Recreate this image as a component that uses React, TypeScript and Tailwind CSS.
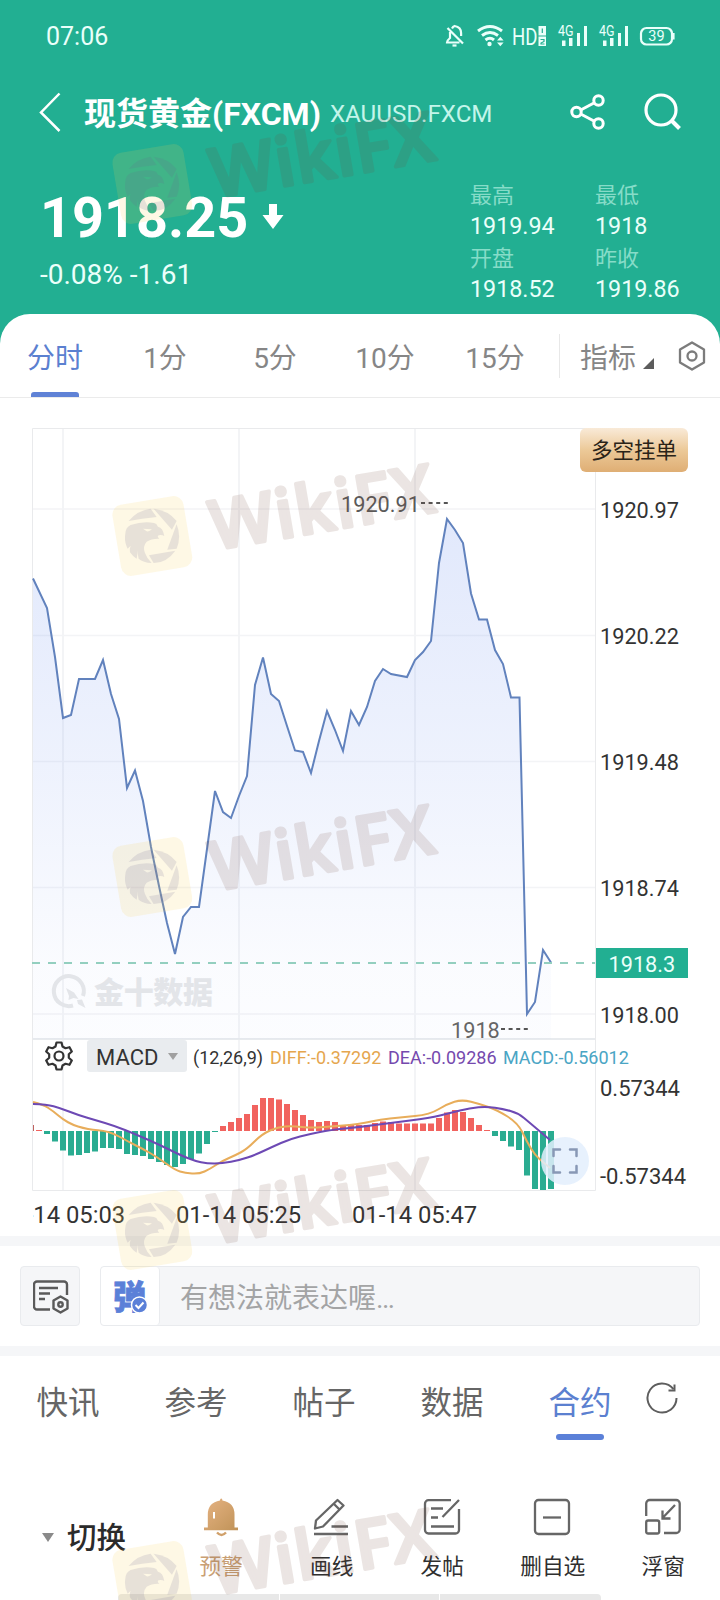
import { ReactNode } from 'react';

type Point = [number, number];

const quoteStats = [
  { label: '最高', value: '1919.94' },
  { label: '最低', value: '1918' },
  { label: '开盘', value: '1918.52' },
  { label: '昨收', value: '1919.86' },
];

const periods = ['分时', '1分', '5分', '10分', '15分'];

const sections = ['快讯', '参考', '帖子', '数据', '合约'];

const pricePoints: Point[] = [
  [33, 578.5], [47, 608], [55, 657], [63, 718], [71, 715], [79, 679], [95, 679],
  [103, 660], [111, 694], [119, 719], [127, 788], [135, 770.5], [143, 801],
  [151, 847], [159, 886], [167, 923], [175, 954], [183, 917], [191, 907],
  [199, 907], [207, 849], [215, 791], [223, 812], [231, 818], [239, 796],
  [247, 776], [255, 685], [263, 657.5], [271, 694], [279, 701], [287, 726],
  [295, 750.5], [303, 752], [311, 773], [319, 741], [327, 711], [335, 730],
  [343, 751], [351, 711], [359, 725], [367, 707], [375, 681], [383, 669],
  [391, 674], [407, 677], [415, 660], [423, 652], [431, 641], [439, 563],
  [447, 519], [455, 530], [463, 543], [471, 593.5], [479, 619.5], [487, 619.5],
  [495, 650], [503, 664], [511, 697.5], [519.5, 697.5], [527, 1014], [535, 1002],
  [543, 950], [551, 962.5],
];

// Histogram heights in px, one bar every 8px, positive is above the zero line
const macdBars = [
  1, -3, -10.5, -19.5, -24.5, -24, -22, -20.5, -17, -17, -18, -23, -24, -25, -28,
  -31, -34, -36, -33, -28, -22.5, -13, -1, 5, 9, 13, 17, 26, 33, 33, 31.5, 27, 21,
  16, 11, 9, 10, 9, 6, 6.5, 6, 6, 8, 9.5, 9, 7.5, 7.5, 7.5, 7.5, 7.5, 13, 18.5, 21,
  19, 13, 6, 1, -5, -10, -15.5, -19, -44.5, -58, -59, -58,
];

const diffPoints: Point[] = [
  [33, 1102], [43, 1104.5], [53, 1111], [63, 1119.5], [73, 1125], [83, 1128],
  [93, 1130], [103, 1130.5], [115, 1134], [127, 1141], [143, 1149], [157, 1157],
  [175, 1170], [185, 1173], [199, 1174], [210, 1169], [222, 1161], [235, 1155.5],
  [247, 1149], [262, 1134], [278, 1127], [292, 1126], [312, 1128], [330, 1126.5],
  [350, 1125], [365, 1123], [380, 1119.5], [400, 1117.5], [430, 1114.5],
  [447, 1104], [462, 1099.5], [480, 1104], [497, 1110], [518, 1123], [527, 1142],
  [535, 1155], [543, 1162], [550, 1168],
];

const deaPoints: Point[] = [
  [33, 1104], [47, 1104.5], [60, 1108], [78, 1115], [95, 1120], [115, 1126],
  [135, 1134], [160, 1145], [180, 1155], [195, 1161], [207, 1163.5], [222, 1163.5],
  [240, 1160], [255, 1155], [272, 1147], [290, 1139], [310, 1134], [330, 1130],
  [360, 1127], [390, 1123], [430, 1118], [450, 1113], [470, 1108], [487, 1106.5],
  [503, 1109], [518, 1113], [530, 1123], [550, 1140],
];

const priceLabels = [
  { y: 517.5, text: '1920.97' },
  { y: 643.5, text: '1920.22' },
  { y: 770, text: '1919.48' },
  { y: 896, text: '1918.74' },
  { y: 1023, text: '1918.00' },
];

const toPath = (points: Point[]) => 'M' + points.map((p) => p.join(' ')).join('L');

// Quadratic smoothing through the midpoints
const toCurve = (points: Point[]) => {
  let d = `M${points[0][0]} ${points[0][1]}`;
  for (let i = 1; i < points.length - 1; i++) {
    const [x, y] = points[i];
    const [nx, ny] = points[i + 1];
    d += `Q${x} ${y} ${(x + nx) / 2} ${(y + ny) / 2}`;
  }
  const last = points[points.length - 1];
  return d + `L${last[0]} ${last[1]}`;
};

export default function App() {
  return (
    <div className="relative h-[1600px] w-[720px] overflow-hidden bg-[#22af92] font-['Roboto','Noto_Sans_CJK_SC',sans-serif]">
      <div className="flex h-full flex-col">
        <header className="h-[314px] shrink-0 text-[#eafffa]">
          <StatusBar />
          <TitleBar />
          <Quote />
        </header>
        <main className="flex grow flex-col rounded-t-[30px] bg-white">
          <PeriodTabs />
          <Chart />
          <div className="h-2.5 shrink-0 bg-[#f5f6f8]"></div>
          <CommentBar />
          <div className="h-2.5 shrink-0 bg-[#f5f6f8]"></div>
          <SectionTabs />
          <Toolbar />
        </main>
      </div>
      <div className="absolute top-[1594px] left-[118px] flex h-2.5 w-[483px] gap-px overflow-hidden rounded-t-sm">
        <div className="w-[161px] bg-[#e8e8e8]"></div>
        <div className="w-[159px] bg-[#e8e8e8]"></div>
        <div className="grow bg-[#e8e8e8]"></div>
      </div>
      <Watermarks />
    </div>
  );
}

function StatusBar() {
  return (
    <div className="flex h-[72px] items-center justify-between pr-[45px] pl-[46px]">
      <span className="text-[25px] leading-none">07:06</span>
      <svg width="230" height="30" viewBox="445 21 230 30" fill="none" stroke="currentColor">
        <path
          d="M459.500 42.500H447q0-2 3-4.500v-6M452 28.500q1-2 2.600-2.500 6.500 1 6.500 7v3M447.500 28l15.500 15.500"
          strokeWidth="2.200"
        />
        <path d="M452.500 45.500h4" strokeWidth="2.200" />
        <path d="M478 31q12-9 24 0M482 35.500q8-6 16 0M485.500 40q4.500-3.500 8.500 0" strokeWidth="3" />
        <circle cx="489.500" cy="44" r="2.200" fill="currentColor" stroke="none" />
        <path d="M497 40.500l3.300-3.800 3.300 3.800zM497 42.500l3.300 3.800 3.300-3.800z" fill="currentColor" stroke="none" />
        <g fill="currentColor" stroke="none">
          <text x="512" y="44.500" fontSize="23" textLength="25.500" lengthAdjust="spacingAndGlyphs">
            HD
          </text>
          <rect x="538.500" y="26" width="7.500" height="9.500" />
          <rect x="538.500" y="36.500" width="7.500" height="9.500" />
        </g>
        <path d="M542.300 28.500v4.500M540.500 39.500h3.500v2l-3 1.500v1h3.500" stroke="#22af92" strokeWidth="1.200" />
        <Signal x={558} />
        <Signal x={599} />
        <rect x="641" y="28" width="31" height="16.500" rx="5.500" strokeWidth="2.200" />
        <path d="M673.500 33v6.500" strokeWidth="2.200" />
        <text x="656.500" y="41.300" textAnchor="middle" fontSize="14.500" fill="currentColor" stroke="none">
          39
        </text>
      </svg>
    </div>
  );
}

function Signal({ x }: { x: number }) {
  return (
    <g fill="currentColor" stroke="none">
      <text x={x} y="36" fontSize="14" textLength="15.500" lengthAdjust="spacingAndGlyphs">
        4G
      </text>
      <rect x={x + 4} y="40.500" width="3.500" height="5.500" />
      <rect x={x + 11} y="38" width="3.500" height="8" />
      <rect x={x + 19} y="33" width="3" height="13" />
      <rect x={x + 26} y="26" width="3" height="20" />
    </g>
  );
}

function TitleBar() {
  return (
    <div className="flex h-[80px] items-center pr-[38px] pl-[39px] text-white">
      <svg width="22" height="40" viewBox="0 0 22 40" fill="none" stroke="currentColor" strokeWidth="2.500">
        <path d="M20.500 1.500L2 20.500l18.500 18.500" />
      </svg>
      <h1 className="ml-[23px] pt-[3px] text-[32px] leading-10 font-bold whitespace-nowrap">
        现货黄金(FXCM)
      </h1>
      <span className="ml-[9px] pt-[3px] text-[24.200px] leading-10 text-[#c4f5ea]">XAUUSD.FXCM</span>
      <svg className="ml-auto" width="36" height="36" viewBox="0 0 36 36" fill="none" stroke="currentColor" strokeWidth="3">
        <circle cx="6.500" cy="18" r="4.700" />
        <circle cx="28.500" cy="6.500" r="4.700" />
        <circle cx="28.500" cy="29.500" r="4.700" />
        <path d="M10.700 16l13.700-7.300M10.700 20l13.700 7.300" />
      </svg>
      <svg className="ml-[38px]" width="38" height="38" viewBox="0 0 38 38" fill="none" stroke="currentColor" strokeWidth="3.200">
        <circle cx="17" cy="17" r="15" />
        <path d="M28 28l7.500 7.500" strokeWidth="4" />
      </svg>
    </div>
  );
}

function Quote() {
  return (
    <div className="flex justify-between pr-[31px] pl-[40px]">
      <div className="pt-[34px]">
        <div className="flex items-center">
          <span className="text-[55.800px] leading-[64px] font-bold text-white">1918.25</span>
          <svg className="mb-1 ml-3.5" width="22" height="25" viewBox="0 0 22 25" fill="white">
            <path d="M7 0h8v11h6.500L11 25 .5 11H7z" />
          </svg>
        </div>
        <p className="mt-[5px] text-[28px] leading-10">-0.08% -1.61</p>
      </div>
      <div className="grid grid-cols-[125px_94px] pt-[28px]">
        {quoteStats.map((stat) => (
          <div key={stat.label} className="h-[63px]">
            <p className="text-[22px] leading-8 text-[#86dcc8]">{stat.label}</p>
            <p className="text-[23.300px] leading-[29px]">{stat.value}</p>
          </div>
        ))}
      </div>
    </div>
  );
}

function PeriodTabs() {
  return (
    <nav className="flex h-[84px] shrink-0 items-center border-b border-[#ebebeb] text-[28px] text-[#868686]">
      {periods.map((period, index) => (
        <div
          key={period}
          className={
            index === 0
              ? 'relative flex h-full w-[110px] items-center justify-center pt-1.5 text-[#5b80d0]'
              : 'relative flex h-full w-[110px] items-center justify-center pt-1.5'
          }
        >
          {period}
          {index === 0 && (
            <span className="absolute bottom-0 h-[5px] w-12 rounded-t-[3px] bg-[#5f82d6]"></span>
          )}
        </div>
      ))}
      <div className="ml-[9px] h-11 w-px bg-[#e8e8e8]"></div>
      <span className="ml-5 pt-1.5">指标</span>
      <svg className="mt-4 ml-[7px]" width="11" height="11" viewBox="0 0 11 11" fill="#5c5c5c">
        <path d="M11 0v11H0z" />
      </svg>
      <svg className="ml-6" width="28" height="30" viewBox="0 0 28 30" fill="none" stroke="#7c7c7c" strokeWidth="2.300">
        <path d="M14 1.500l12 7v13l-12 7-12-7v-13z" strokeLinejoin="round" />
        <circle cx="14" cy="15" r="4.500" />
      </svg>
    </nav>
  );
}

function Chart() {
  return (
    <section className="relative h-[838px] shrink-0">
      <svg width="720" height="838" viewBox="0 398 720 838">
        <defs>
          <linearGradient id="area" x1="0" y1="519" x2="0" y2="1039" gradientUnits="userSpaceOnUse">
            <stop offset="0" stopColor="#5b83ee" stopOpacity="0.18" />
            <stop offset="0.5" stopColor="#5b83ee" stopOpacity="0.1" />
            <stop offset="0.85" stopColor="#5b83ee" stopOpacity="0.03" />
            <stop offset="1" stopColor="#5b83ee" stopOpacity="0.02" />
          </linearGradient>
          <clipPath id="plot">
            <rect x="33" y="1040" width="563" height="196" />
          </clipPath>
        </defs>

        <g stroke="#f3f4f6" strokeWidth="2">
          <path d="M63 429V1190M239 429V1190M415 429V1190" />
          <path d="M33 509H595M33 635.5H595M33 761.5H595M33 887.5H595M33 1014H595" strokeWidth="1.500" />
        </g>
        <path d="M32.500 428.500H595.500V1190.500H32.500Z" fill="none" stroke="#e9eaec" />
        <path d="M33 1039H595" stroke="#e8ebee" strokeWidth="2" />

        <path d={toPath(pricePoints) + 'V1039H33Z'} fill="url(#area)" />
        <path d={toPath(pricePoints)} fill="none" stroke="#6182bd" strokeWidth="2" />
        <path d="M32 963H595" stroke="#93cfbf" strokeWidth="2" strokeDasharray="8 8" />

        <g fill="#e3e5e9">
          <path d="M73 1005.500A15 15 0 1 1 83 996" fill="none" stroke="#e3e5e9" strokeWidth="4" />
          <path d="M66 988l8 4.500 4.500 6.500-5-1-5 2 .5-4zM77 1000l5-.5 3.500 8.500-7.500-4z" />
          <text x="94" y="1003" fontSize="30" fontWeight="900" textLength="119">
            金十数据
          </text>
        </g>

        <g fontSize="21.700" fill="#333">
          {priceLabels.map((label) => (
            <text key={label.text} x="600" y={label.y}>
              {label.text}
            </text>
          ))}
          <text x="600" y="1096" fontSize="22">0.57344</text>
          <text x="600" y="1184" fontSize="22">-0.57344</text>
          <text x="341" y="511.500" fill="#5a5a5a">1920.91</text>
          <text x="451" y="1037.500" fill="#666">1918</text>
        </g>
        <path d="M421 503H448M501 1029H528" stroke="#555" strokeWidth="2" strokeDasharray="4 3.600" />

        <rect x="596" y="948" width="92" height="30" fill="#22af92" />
        <text x="608.500" y="971.500" fontSize="21.700" fill="#eafffa">
          1918.3
        </text>

        <rect x="33" y="1125" width="1" height="6" fill="#c0625f" />
        {macdBars.map((value, index) => (
          <rect
            key={index}
            x={36 + index * 8}
            y={value > 0 ? 1131 - value : 1131}
            width="6"
            height={Math.abs(value)}
            fill={value > 0 ? '#f1635f' : '#2aac91'}
          />
        ))}
        <path d={toCurve(diffPoints)} fill="none" stroke="#e8ad5b" strokeWidth="2" />
        <path d={toCurve(deaPoints)} fill="none" stroke="#6d49b4" strokeWidth="2" />

        <g fontSize="23.800" fill="#333" clipPath="url(#plot)">
          <text x="0" y="1222.500">01-14 05:03</text>
          <text x="176" y="1222.500">01-14 05:25</text>
          <text x="352" y="1222.500">01-14 05:47</text>
        </g>
      </svg>

      <div className="absolute top-[30px] left-[580px] flex h-11 w-[108px] items-center justify-center rounded-md bg-linear-to-b from-[#f9ead8] via-[#ecc998] to-[#dfae74] pt-0.5 text-[21.500px] text-[#2a2318]">
        多空挂单
      </div>

      <div className="absolute top-[642px] left-[45px] flex h-8 items-center text-[18px] whitespace-nowrap">
        <svg width="28" height="30" viewBox="0 0 28 30" fill="none" stroke="#333" strokeWidth="2.200">
          <path
            d="M11.500 1.500h5l1 4 3 1.700 4-1 2.300 4.300-3 2.800v3.400l3 2.800-2.300 4.300-4-1-3 1.700-1 4h-5l-1-4-3-1.700-4 1-2.300-4.300 3-2.800v-3.400l-3-2.800 2.300-4.300 4 1 3-1.700z"
            strokeLinejoin="round"
          />
          <circle cx="14" cy="15" r="4.500" />
        </svg>
        <div className="ml-3.5 flex h-8 w-[100px] items-center rounded-[3px] bg-[#e9ecef] pt-[3px] pl-[9px] text-[22px] text-[#333]">
          MACD
          <svg className="mb-[3px] ml-2.5" width="10" height="7" viewBox="0 0 10 7" fill="#a0a0a0">
            <path d="M0 0h10L5 7z" />
          </svg>
        </div>
        <span className="ml-1.5 w-[77px] pt-[3px] text-[#333]">(12,26,9)</span>
        <span className="w-[118px] pt-[3px] text-[#e5a64e]">DIFF:-0.37292</span>
        <span className="w-[115px] pt-[3px] text-[#7549ae]">DEA:-0.09286</span>
        <span className="pt-[3px] text-[#4aa5c4]">MACD:-0.56012</span>
      </div>

      <div className="absolute top-[739px] left-[541px] flex size-12 items-center justify-center rounded-full bg-[#e3effd]/85">
        <svg width="26" height="26" viewBox="0 0 26 26" fill="none" stroke="#8898b5" strokeWidth="2.500" strokeLinecap="round">
          <path d="M1.500 8V1.500H8M18 1.500h6.500V8M24.500 18v6.500H18M8 24.500H1.500V18" />
        </svg>
      </div>
    </section>
  );
}

function CommentBar() {
  return (
    <div className="flex h-[100px] shrink-0 items-center gap-5 px-5">
      <div className="flex size-[60px] items-center justify-center rounded border border-[#e9ebee] bg-[#f5f6f8]">
        <svg className="mt-0.5 ml-0.5" width="36" height="34" viewBox="0 0 36 34" fill="none" stroke="#5a5a5a" strokeWidth="2.400">
          <path d="M17 29.500H4a3 3 0 0 1-3-3V4.500a3 3 0 0 1 3-3h27a3 3 0 0 1 3 3V15" />
          <path d="M6 8h19M6 13.500h11M6 19h6" />
          <path d="M27.500 16.500l7 4v8l-7 4-7-4v-8z" strokeLinejoin="round" />
          <circle cx="27.500" cy="24.500" r="2.200" />
        </svg>
      </div>
      <div className="flex h-[60px] grow items-center rounded border border-[#e9ebee] bg-[#f5f6f8]">
        <div className="flex h-full w-[59px] items-center justify-center rounded border-r border-[#e9ebee] bg-white">
          <svg width="40" height="52" viewBox="-2 -8 40 52">
            <text x="1" y="30.500" fontSize="33" fontWeight="900" fill="#5b80d8" stroke="#5b80d8" strokeWidth="0.800">
              弹
            </text>
            <circle cx="27.500" cy="27" r="8" fill="#5b80d8" stroke="white" strokeWidth="1.500" />
            <path d="M23.500 27l3 3 5-5.500" fill="none" stroke="white" strokeWidth="2" />
          </svg>
        </div>
        <span className="ml-5 pt-1.5 text-[28px] text-[#a3a4a5]">有想法就表达喔…</span>
      </div>
    </div>
  );
}

function SectionTabs() {
  return (
    <nav className="flex h-[92px] shrink-0 items-center pl-[4px] text-[31.500px] text-[#666]">
      {sections.map((section, index) => (
        <div
          key={section}
          className={
            index === 4
              ? 'relative flex h-full w-32 items-center justify-center pt-[3px] text-[#5b80d0]'
              : 'relative flex h-full w-32 items-center justify-center pt-[3px]'
          }
        >
          {section}
          {index === 4 && (
            <span className="absolute bottom-2 h-1.5 w-12 rounded-full bg-[#5b80d8]"></span>
          )}
        </div>
      ))}
      <svg className="mb-2 ml-0.5" width="32" height="32" viewBox="0 0 32 32" fill="none" stroke="#5e5e5e" strokeWidth="2">
        <path d="M30.500 16A14.500 14.500 0 1 1 27.500 7.200" />
        <path d="M28.500 2.500v6h-6" />
      </svg>
    </nav>
  );
}

function Tool({ label, children, className = 'text-[#2f2f2f]' }: { label: string; children: ReactNode; className?: string }) {
  return (
    <div className="flex w-[110.500px] flex-col items-center">
      <svg className="-ml-px" width="40" height="40" viewBox="0 0 40 40" fill="none" stroke="#666" strokeWidth="2.300">
        {children}
      </svg>
      <span className={`mt-3.5 text-[21.700px] leading-8 ${className}`}>{label}</span>
    </div>
  );
}

function Toolbar() {
  return (
    <div className="flex h-[152px] shrink-0 pt-[49px]">
      <div className="flex h-20 w-[166px] items-center pl-[42px]">
        <svg width="12" height="9" viewBox="0 0 12 9" fill="#8a8a8a">
          <path d="M0 0h12L6 9z" />
        </svg>
        <span className="ml-[13px] pt-[3px] text-[29.500px] font-medium text-[#2b2b2b]">切换</span>
      </div>
      <Tool label="预警" className="text-[#c9a074]">
        <defs>
          <linearGradient id="bell" x1="0" y1="0" x2="1" y2="1">
            <stop offset="0" stopColor="#e6b383" />
            <stop offset="1" stopColor="#c09358" />
          </linearGradient>
        </defs>
        <g stroke="none" fill="url(#bell)">
          <path d="M19 3.500q0-2 1.200-2t1.200 2q12.100 2 12.100 14v13H37v2.800H3v-2.800h3.800v-13q0-12 12.200-14z" />
        </g>
        <path d="M16 35.500q4.500 5 9 0" stroke="#d0a06a" />
        <path d="M13 15v6.500" stroke="#fff" strokeWidth="2" />
      </Tool>
      <Tool label="画线">
        <path d="M4 31.500l1-8L26.500 3l6 5.500L12 29.500zM22.500 6.500l6 6" strokeLinejoin="round" />
        <path d="M20.500 29.500H37M3 37h34" />
      </Tool>
      <Tool label="发帖">
        <path d="M29 3.200H6.500a3.500 3.500 0 0 0-3.500 3.500V33a3.500 3.500 0 0 0 3.500 3.500h27A3.500 3.500 0 0 0 37 33V12" />
        <path d="M37 3L20.500 20M9 11.500h12M9 20.500h7M9 29.500h23" />
      </Tool>
      <Tool label="删自选">
        <rect x="3" y="3" width="34" height="34" rx="3.500" />
        <path d="M11 20.500h18" />
      </Tool>
      <Tool label="浮窗">
        <path d="M3.200 19V6.500A3.500 3.500 0 0 1 6.700 3h26.500a3.500 3.500 0 0 1 3.500 3.500v26a3.500 3.500 0 0 1-3.500 3.500H21" />
        <rect x="3.200" y="23.500" width="13" height="13" rx="2" />
        <path d="M32 8L19.500 21M19.500 13.500v8h8" />
      </Tool>
    </div>
  );
}

function Watermarks() {
  return (
    <svg
      className="pointer-events-none absolute top-0 left-0"
      width="720"
      height="1600"
      viewBox="0 0 720 1600"
    >
      {[184, 536, 877, 1230, 1581].map((y) => (
        <g key={y} transform={`translate(152.300 ${y})`}>
          <rect
            x="-36"
            y="-36"
            width="72"
            height="72"
            rx="10"
            fill="#f8d050"
            opacity="0.15"
            transform="rotate(-9.500)"
          />
          <g transform="scale(0.333) translate(-457 -409)" fill="#6a6290" opacity="0.15">
            <path d="M386 364Q412 332 452 327L470 352Q425 356 386 364Z" />
            <path d="M461 327Q505 332 530 364L516 390Z" />
            <path d="M530 374Q545 410 530 447L502 450Z" />
            <path d="M526 453Q500 490 461 490L447 467Z" />
            <path
              fillRule="evenodd"
              d="M376 402Q377 383 392 376Q430 364 462 370Q470 371 474 381Q489 384 493 409Q485 404 476 407Q470 411 478 417Q455 416 440 426Q427 440 435 460Q440 475 455 490Q430 489 416 477Q412 465 414 452L410 477Q398 470 390 458Q388 448 392 438L383 447Q374 430 375 410ZM429 387L456 389Q448 397 440 395Z"
            />
          </g>
          <g transform="rotate(-9.800)" opacity="0.136">
            <text
              x="59"
              y="24.500"
              fontSize="68"
              fontWeight="600"
              fill="#734739"
              stroke="#734739"
              strokeWidth="3.500"
              strokeLinejoin="round"
              textLength="226"
              className="font-['Open_Sans',sans-serif]"
            >
              WikiFX
            </text>
          </g>
        </g>
      ))}
    </svg>
  );
}
